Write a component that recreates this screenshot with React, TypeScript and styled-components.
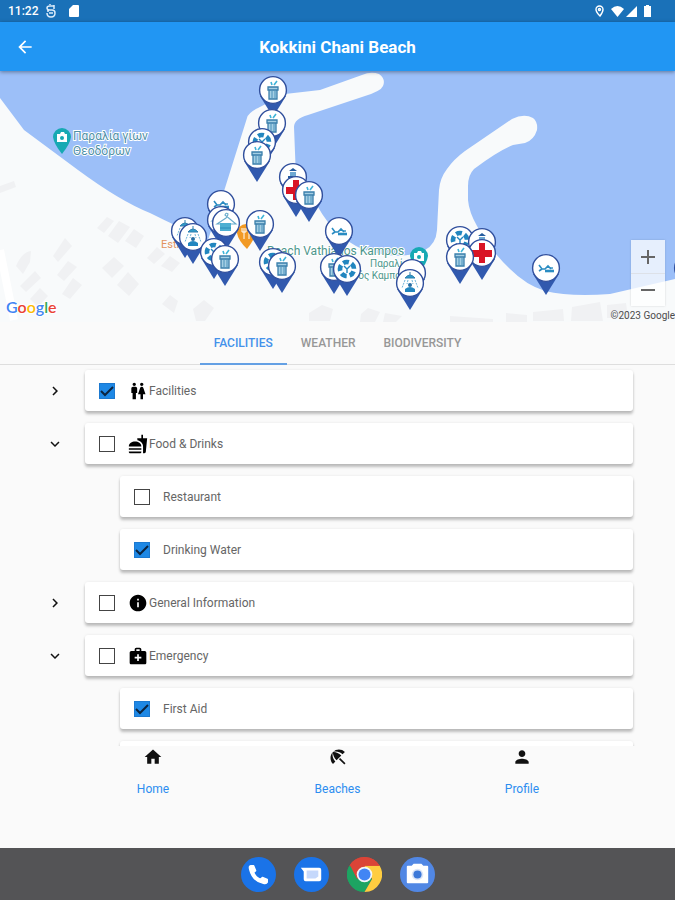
import React, { useState } from "react";
import styled, { createGlobalStyle } from "styled-components";
import {
  MdAdd,
  MdArrowBack,
  MdBeachAccess,
  MdChevronRight,
  MdExpandMore,
  MdFastfood,
  MdHome,
  MdInfo,
  MdMedicalServices,
  MdPerson,
  MdRemove,
  MdWc,
} from "react-icons/md";

const GlobalStyle = createGlobalStyle`
  *, *::before, *::after { box-sizing: border-box; }
  body { margin: 0; background: #fafafa; font-family: Roboto, "Noto Sans", sans-serif; }
  button { font: inherit; border: 0; background: none; padding: 0; cursor: pointer; }
  ul { list-style: none; margin: 0; padding: 0; }
  svg { display: block; }
`;

const Screen = styled.div`
  display: flex;
  flex-direction: column;
  height: 100vh;
  min-height: 640px;
  background: #fafafa;
`;

const StatusBar = styled.div`
  display: flex;
  align-items: center;
  justify-content: space-between;
  flex: none;
  height: 22px;
  padding: 0 22px 0 8px;
  background: #1a71b8;
  color: #fff;
  font-size: 12px;
  font-weight: 500;
`;

const StatusGroup = styled.div<{ $gap: number }>`
  display: flex;
  align-items: center;
  gap: ${(p) => p.$gap}px;
`;

const AppBar = styled.header`
  display: grid;
  grid-template-columns: 50px 1fr 50px;
  align-items: center;
  flex: none;
  height: 49px;
  background: #2196f3;
  color: #fff;
  z-index: 1;
  box-shadow: 0 1px 4px rgba(0, 0, 0, 0.4);
`;

const BackButton = styled.button`
  display: grid;
  place-items: center;
  height: 48px;
  color: #fff;
`;

const Title = styled.h1`
  margin: 0;
  font-size: 17px;
  font-weight: 700;
  line-height: 24px;
  text-align: center;
`;

const MapArea = styled.section`
  position: relative;
  flex: none;
  background: #f8f9fa;
`;

const MapDrawing = styled.svg`
  width: 100%;
  height: auto;
`;

const ZoomControl = styled.div`
  position: absolute;
  right: 10px;
  bottom: 16px;
  display: grid;
  width: 34px;
  background: rgba(255, 255, 255, 0.75);
  box-shadow: 0 0 2px rgba(0, 0, 0, 0.15);
`;

const ZoomButton = styled.button`
  display: grid;
  place-items: center;
  height: 33px;
  color: #666;
  & + & {
    border-top: 1px solid #dde1e8;
  }
`;

const Tabs = styled.div`
  display: flex;
  justify-content: center;
  flex: none;
  height: 43px;
  border-bottom: 1px solid #dedede;
`;

const Tab = styled.button<{ $active: boolean }>`
  height: 43px;
  padding: 0 14px;
  border-bottom: 2px solid ${(p) => (p.$active ? "#64a0e4" : "transparent")};
  color: ${(p) => (p.$active ? "#4391ea" : "#979797")};
  font-size: 12px;
  font-weight: 500;
`;

const List = styled.main`
  flex: 1;
  min-height: 0;
  overflow-y: auto;
  scrollbar-width: none;
  padding: 5px 42px 0 0;
`;

const Tree = styled.ul`
  display: grid;
  gap: 12px;
`;

const Row = styled.li<{ $child?: boolean }>`
  display: flex;
  align-items: center;
  padding-left: ${(p) => (p.$child ? 120 : 45)}px;
`;

const Expander = styled.button`
  flex: none;
  width: 40px;
  height: 40px;
  padding-left: 1px;
  color: #111;
`;

const Card = styled.label`
  display: flex;
  align-items: center;
  flex: 1;
  height: 41px;
  padding-left: 14px;
  border-radius: 3px;
  background: #fff;
  box-shadow: 0 3px 3px rgba(0, 0, 0, 0.24), 0 0 3px rgba(0, 0, 0, 0.08);
  color: #666;
  font-size: 12px;
  cursor: pointer;
`;

const Tick = styled.span`
  display: grid;
  flex: none;
  width: 16px;
  height: 16px;
  & > * {
    grid-area: 1 / 1;
  }
`;

const Box = styled.input`
  appearance: none;
  width: 16px;
  height: 16px;
  margin: 0;
  border: 1px solid #444;
  background: #fff;
  cursor: pointer;
  &:checked {
    border-color: #1c79d0;
    background: #1e88e5;
  }
`;

const TickMark = styled.svg`
  pointer-events: none;
`;

const CardIcon = styled.span`
  display: grid;
  place-items: center;
  width: 20px;
  margin-left: 13px;
  margin-right: 1px;
  color: #000;
`;

const ChildText = styled.span`
  margin-left: 13px;
`;

const BottomNav = styled.nav`
  display: grid;
  grid-template-columns: repeat(3, 1fr);
  align-items: start;
  flex: none;
  height: 102px;
  padding: 0 9%;
`;

const NavLink = styled.a`
  display: grid;
  justify-items: center;
  gap: 14px;
  color: #2c8df0;
  font-size: 12px;
  line-height: 16px;
  text-decoration: none;
  svg {
    color: #111;
  }
`;

const NavIcon = styled.span`
  display: grid;
  place-items: center;
  height: 21px;
`;

const Dock = styled.div`
  display: flex;
  align-items: center;
  justify-content: center;
  gap: 18px;
  flex: none;
  height: 52px;
  background: #545456;
`;

const DockButton = styled.button`
  width: 35px;
  height: 35px;
`;

type Glyph = "bin" | "recycle" | "cross" | "tower" | "lounge" | "hanger" | "shower";

const pins: { x: number; y: number; glyph: Glyph }[] = [
  { x: 273, y: 90, glyph: "bin" },
  { x: 272, y: 123, glyph: "bin" },
  { x: 262, y: 142, glyph: "recycle" },
  { x: 257, y: 155, glyph: "bin" },
  { x: 293, y: 177, glyph: "tower" },
  { x: 296, y: 190, glyph: "cross" },
  { x: 309, y: 195, glyph: "bin" },
  { x: 221, y: 204, glyph: "lounge" },
  { x: 221, y: 220, glyph: "hanger" },
  { x: 226, y: 223, glyph: "hanger" },
  { x: 260, y: 224, glyph: "bin" },
  { x: 185, y: 231, glyph: "shower" },
  { x: 193, y: 237, glyph: "shower" },
  { x: 214, y: 252, glyph: "recycle" },
  { x: 225, y: 259, glyph: "bin" },
  { x: 339, y: 231, glyph: "lounge" },
  { x: 273, y: 262, glyph: "recycle" },
  { x: 282, y: 266, glyph: "bin" },
  { x: 334, y: 267, glyph: "bin" },
  { x: 347, y: 269, glyph: "recycle" },
  { x: 412, y: 273, glyph: "lounge" },
  { x: 410, y: 283, glyph: "shower" },
  { x: 460, y: 240, glyph: "recycle" },
  { x: 482, y: 242, glyph: "tower" },
  { x: 482, y: 253, glyph: "cross" },
  { x: 460, y: 257, glyph: "bin" },
  { x: 546, y: 268, glyph: "lounge" },
  { x: 688, y: 268, glyph: "bin" },
];

function PinGlyph({ glyph }: { glyph: Glyph }) {
  switch (glyph) {
    case "bin":
      return (
        <g>
          <path d="M-5 -3H5V0H4L4 9H-4L-4 0H-5Z" fill="#a5cfe4" />
          <path d="M-5 -3H5V0H-5ZM-4 0V9H4V0" fill="none" stroke="#3a7fab" strokeWidth="1.3" />
          <path d="M-1 1V8M2 1V8" stroke="#4a92bb" strokeWidth="1" />
          <path d="M-1 -5L-2 -8M1 -5L4 -9" stroke="#3fb4d8" strokeWidth="1.6" />
        </g>
      );
    case "recycle":
      return (
        <g>
          <circle
            r="7"
            fill="none"
            stroke="#2286bf"
            strokeWidth="4.6"
            strokeDasharray="5.8 3"
            transform="rotate(20)"
          />
          <path d="M-3 -3L0 0L3 -3M0 0V4" fill="none" stroke="#2286bf" strokeWidth="1.4" />
        </g>
      );
    case "cross":
      return <path d="M-3 -10H3V-3H10V4H3V10H-3V4H-10V-3H-3Z" fill="#d91425" />;
    case "tower":
      return (
        <g fill="#245b9e">
          <path d="M-4 -6L0 -9L4 -6Z" />
          <path d="M-3 -5H3V-1H-3Z" fill="#6fa9d2" />
          <path d="M-5 -1H5V1H-5ZM-4 1H-2L-4 10H-6ZM2 1H4L6 10H4Z" />
        </g>
      );
    case "lounge":
      return (
        <g fill="none" stroke="#2a8cc2" strokeWidth="1.6">
          <path d="M-7 -3L-4 1L-7 3M-4 1H-1L2 -2L5 1" />
          <path d="M-1 3H8" strokeWidth="2.6" />
          <path d="M4 0H7" strokeWidth="1.4" />
        </g>
      );
    case "hanger":
      return (
        <g>
          <path d="M-1 -8Q0 -11 2 -9Q2 -7 0 -5L-9 1H10Z" fill="none" stroke="#68abcb" strokeWidth="1.1" />
          <path d="M-6 0H5V8H-6Z" fill="#4dafd2" />
          <path d="M-6 5H5" stroke="#2a8cb8" strokeWidth="1" />
        </g>
      );
    case "shower":
      return (
        <g>
          <path d="M0 -11V-8M-5 -5Q0 -11 5 -5Z" stroke="#2f7faf" fill="#2f9bc9" />
          <path d="M-5 -3L-8 5M5 -3L8 5M-2 -3L-3 1M2 -3L3 1" stroke="#6db4d8" strokeWidth="1" strokeDasharray="2 1" />
          <circle cy="2" r="2" fill="#286fa5" />
          <path d="M-5 9V6Q0 2 5 6V9Z" fill="#2286bf" />
        </g>
      );
  }
}

function Pin({ x, y, glyph }: { x: number; y: number; glyph: Glyph }) {
  return (
    <g transform={`translate(${x} ${y})`}>
      <path d="M-13 6L0 27L13 6Z" fill="#3159ae" />
      <circle r="13.4" fill="#fff" stroke="#304f9d" strokeWidth="1.4" />
      <PinGlyph glyph={glyph} />
    </g>
  );
}

function PhotoPin({ x, y }: { x: number; y: number }) {
  return (
    <g transform={`translate(${x} ${y})`}>
      <path d="M-9 -2A9 9 0 1 1 9 -2Q8 5 0 15Q-8 5 -9 -2Z" fill="#17a9b3" />
      <path d="M-5 -5H-2L-1 -7H2L3 -5H5V3H-5Z" fill="#fff" />
      <circle cy="-1" r="2" fill="#17a9b3" />
    </g>
  );
}

const halo = { stroke: "#ffffff", strokeWidth: 2, paintOrder: "stroke" } as const;

function BeachMap() {
  return (
    <MapDrawing viewBox="0 71 675 251" role="img" aria-label="Map of Kokkini Chani Beach">
      <rect y="71" width="675" height="251" fill="#9cbff8" />
      <path
        d="M0 98L24 130L78 170Q120 201 150 213Q180 228 208 240L225 188L247 118Q248 113 258 108L285 94L320 90L362 75Q371 71 379 74Q386 79 383 86Q381 91 365 96L308 115Q294 119 294 127L296 178L318 207Q334 236 362 249Q400 262 425 250Q436 244 437 230L439 190Q440 178 447 169Q454 159 465 151L512 119Q524 113 533 118Q538 122 537 130Q534 140 525 143L513 145Q498 151 474 169Q468 175 468 186V200Q469 212 477 226Q490 250 510 269Q526 285 545 291Q570 297 610 294L675 279V322H0Z"
        fill="#f8fafb"
      />
      <path d="M0 250L14 320" stroke="#fff" strokeWidth="8" />
      <g fill="#f0f1f3">
        <path d="M0 186L14 181L16 187L0 193Z" />
        <path d="M97 228L107 217L114 221L104 233Z" />
        <path d="M108 236L119 221L130 227L118 243Z" />
        <path d="M125 241L134 229L144 236L136 248Z" />
        <path d="M53 256L65 238L72 246L58 262Z" />
        <path d="M57 275L68 261L77 267L64 281Z" />
        <path d="M62 294L73 278L82 285L70 299Z" />
        <path d="M102 268L114 257L124 266L112 278Z" />
        <path d="M117 285L128 272L139 284L129 296Z" />
        <path d="M16 266Q22 252 31 251L30 262L23 274Z" />
        <path d="M20 286L35 271L41 278L26 292Z" />
        <path d="M30 299L40 288L48 296L38 307Z" />
        <path d="M147 258L157 247L165 254L154 264Z" />
        <path d="M161 266L170 256L180 263L172 272Z" />
        <path d="M162 304L170 295L178 301L174 313Z" />
        <path d="M193 309L204 300L214 308L205 321H196Z" />
        <path d="M309 313L322 305L333 309L330 321H309Z" />
        <path d="M361 314L368 308L380 312L375 322H360Z" />
        <path d="M385 313L402 316L396 322H383Z" />
        <path d="M450 316L493 319V322H450Z" />
        <path d="M506 313L527 315V322H506Z" />
        <path d="M533 312L563 309L564 321H533Z" />
        <path d="M572 307L600 302L603 321H571Z" />
        <path d="M607 305L626 303L628 318H607Z" />
      </g>
      <g fontFamily="Roboto, 'Noto Sans', sans-serif" fontSize="12">
        <g fill="#4f90a6" {...halo}>
          <text x="73" y="140">Παραλία γίων</text>
          <text x="73" y="155">Θεοδόρων</text>
        </g>
        <g fill="#4d978c" {...halo}>
          <text x="267" y="255">Beach Vathianos Kampos</text>
          <text x="370" y="267" fontSize="10">Παραλία</text>
          <text x="327" y="279" fontSize="10">Βαθιανός Καμπος</text>
        </g>
        <text x="161" y="248" fontSize="11" fill="#e2935e">Estiatorio</text>
      </g>
      <PhotoPin x={62} y={139} />
      <PhotoPin x={419} y={258} />
      <path d="M237 233A9 9 0 0 1 255 233Q255 239 247 249Q238 240 237 233Z" fill="#f29a24" />
      <path d="M244 228V239M249 228V239M242 228V232H246V228" fill="none" stroke="#fff" strokeWidth="1" />
      {pins.map((pin) => (
        <Pin key={`${pin.x}-${pin.y}`} {...pin} />
      ))}
      <text x="6" y="313" fontFamily="Lato, sans-serif" fontSize="16" fontWeight="600" {...halo}>
        <tspan fill="#4285f4">G</tspan>
        <tspan fill="#ea4335">o</tspan>
        <tspan fill="#fbbc05">o</tspan>
        <tspan fill="#4285f4">g</tspan>
        <tspan fill="#34a853">l</tspan>
        <tspan fill="#ea4335">e</tspan>
      </text>
      <text x="675" y="319" textAnchor="end" fontFamily="Roboto, sans-serif" fontSize="10" fill="#4c4c4c">
        ©2023 Google
      </text>
    </MapDrawing>
  );
}

function PhoneIcon() {
  return (
    <svg viewBox="0 0 36 36" aria-hidden="true">
      <circle cx="18" cy="18" r="18" fill="#1a73e8" />
      <path
        d="M10 9H13L15 14L13 16Q15 21 20 23L22 21L27 23V26Q26 28 23 27Q12 25 9 13Q8 9 10 9Z"
        fill="#fff"
        stroke="#fff"
        strokeWidth="1.5"
        strokeLinejoin="round"
      />
    </svg>
  );
}

function MessagesIcon() {
  return (
    <svg viewBox="0 0 36 36" aria-hidden="true">
      <circle cx="18" cy="18" r="18" fill="#1a73e8" />
      <path d="M7 11H26Q28 11 28 13V23Q28 25 26 25H12Q10 25 10 23V15Z" fill="#fff" />
      <path d="M13 14H25V20L22 22H13Z" fill="#c5d8fb" />
    </svg>
  );
}

function ChromeIcon() {
  return (
    <svg viewBox="0 0 36 36" aria-hidden="true">
      <path d="M18 18L2.4 9A18 18 0 0 1 33.6 9Z" fill="#db4437" />
      <path d="M18 18L2.4 9A18 18 0 0 0 18 36L25.8 22.5Z" fill="#1da462" />
      <path d="M18 9H33.6A18 18 0 0 1 18 36L25.8 22.5Z" fill="#ffcd40" />
      <path d="M3 8.2L10.2 22.5L18 18V9H33.6A18 18 0 0 0 3 8.2Z" fill="#db4437" />
      <path d="M2.4 9L10.2 22.5L18 26L14 35.500A18 18 0 0 1 2.4 9Z" fill="#1da462" />
      <circle cx="18" cy="18" r="8" fill="#f4f6fa" />
      <circle cx="18" cy="18" r="6.2" fill="#4285f4" />
    </svg>
  );
}

function CameraIcon() {
  return (
    <svg viewBox="0 0 36 36" aria-hidden="true">
      <circle cx="18" cy="18" r="18" fill="#5187e4" />
      <path d="M7 10Q7 9 8 9H12L14 7H22L24 9H28Q29 9 29 10V26Q29 27 28 27H8Q7 27 7 26Z" fill="#fff" />
      <circle cx="18" cy="18" r="6" fill="#dbe5f8" />
      <circle cx="18" cy="18" r="4.2" fill="#3c78d8" />
    </svg>
  );
}

const groups = [
  { name: "Facilities", icon: <MdWc size={20} />, open: false, children: [] },
  { name: "Food & Drinks", icon: <MdFastfood size={20} />, open: true, children: ["Restaurant", "Drinking Water"] },
  { name: "General Information", icon: <MdInfo size={20} />, open: false, children: [] },
  { name: "Emergency", icon: <MdMedicalServices size={20} />, open: true, children: ["First Aid", ""] },
];

const tabs = ["FACILITIES", "WEATHER", "BIODIVERSITY"];

function TickBox({ checked, onChange }: { checked: boolean; onChange: () => void }) {
  return (
    <Tick>
      <Box type="checkbox" checked={checked} onChange={onChange} />
      {checked && (
        <TickMark width="16" height="16" viewBox="0 0 16 16" aria-hidden="true">
          <path d="M2 8L6 12L14 4" fill="none" stroke="#0b2440" strokeWidth="2" />
        </TickMark>
      )}
    </Tick>
  );
}

export default function App() {
  const [tab, setTab] = useState("FACILITIES");
  const [open, setOpen] = useState(groups.filter((g) => g.open).map((g) => g.name));
  const [checked, setChecked] = useState(["Facilities", "Drinking Water", "First Aid"]);
  const flip = (list: string[], name: string) =>
    list.includes(name) ? list.filter((n) => n !== name) : [...list, name];

  return (
    <>
      <GlobalStyle />
      <Screen>
        <StatusBar>
          <StatusGroup $gap={8}>
            <span>11:22</span>
            <svg width="10" height="14" viewBox="0 0 10 14" fill="none" stroke="#dcecfa" strokeWidth="1.5">
              <path d="M8 2H4Q1 2 1 4Q1 6 4 6H6Q9 6 9 9Q9 13 5 13Q1 13 1 9M4 1V0M8 1V5M3 9H7M1 7H3" />
            </svg>
            <svg width="20" height="14" viewBox="0 0 20 14" fill="#fff">
              <path d="M9 1H14Q15 1 15 2V12Q15 13 14 13H6Q5 13 5 12V5Z" />
            </svg>
          </StatusGroup>
          <StatusGroup $gap={2}>
            <svg width="14" height="12" viewBox="0 0 14 12" fill="none" stroke="#fff" strokeWidth="1.4">
              <path d="M5 11Q1 7 1 4.500A3.500 3.500 0 0 1 8 4.500Q8 7 5 11Z" />
              <circle cx="4.500" cy="4.500" r="1" />
            </svg>
            <svg width="13" height="11" viewBox="0 0 13 11" fill="#fff">
              <path d="M0 3Q6.500 -3 13 3L6.500 11Z" />
            </svg>
            <svg width="11" height="11" viewBox="0 0 11 11" fill="#fff">
              <path d="M11 0V11H0Z" />
            </svg>
            <svg width="14" height="12" viewBox="0 0 14 12" fill="#fff">
              <path d="M7 0H10V1H12V12H5V1H7Z" />
            </svg>
          </StatusGroup>
        </StatusBar>
        <AppBar>
          <BackButton aria-label="Back">
            <MdArrowBack size={20} />
          </BackButton>
          <Title>Kokkini Chani Beach</Title>
        </AppBar>
        <MapArea>
          <BeachMap />
          <ZoomControl>
            <ZoomButton aria-label="Zoom in">
              <MdAdd size={24} />
            </ZoomButton>
            <ZoomButton aria-label="Zoom out">
              <MdRemove size={24} />
            </ZoomButton>
          </ZoomControl>
        </MapArea>
        <Tabs role="tablist">
          {tabs.map((name) => (
            <Tab key={name} role="tab" aria-selected={tab === name} $active={tab === name} onClick={() => setTab(name)}>
              {name}
            </Tab>
          ))}
        </Tabs>
        <List>
          <Tree>
            {groups.map((group) => (
              <React.Fragment key={group.name}>
                <Row>
                  <Expander aria-label={`Toggle ${group.name}`} onClick={() => setOpen(flip(open, group.name))}>
                    {open.includes(group.name) ? <MdExpandMore size={18} /> : <MdChevronRight size={18} />}
                  </Expander>
                  <Card>
                    <TickBox
                      checked={checked.includes(group.name)}
                      onChange={() => setChecked(flip(checked, group.name))}
                    />
                    <CardIcon>{group.icon}</CardIcon>
                    {group.name}
                  </Card>
                </Row>
                {open.includes(group.name) &&
                  group.children.map((child) => (
                    <Row key={child} $child>
                      <Card>
                        <TickBox checked={checked.includes(child)} onChange={() => setChecked(flip(checked, child))} />
                        <ChildText>{child}</ChildText>
                      </Card>
                    </Row>
                  ))}
              </React.Fragment>
            ))}
          </Tree>
        </List>
        <BottomNav>
          <NavLink href="#home">
            <NavIcon>
              <MdHome size={20} />
            </NavIcon>
            Home
          </NavLink>
          <NavLink href="#beaches">
            <NavIcon>
              <MdBeachAccess size={20} />
            </NavIcon>
            Beaches
          </NavLink>
          <NavLink href="#profile">
            <NavIcon>
              <MdPerson size={20} />
            </NavIcon>
            Profile
          </NavLink>
        </BottomNav>
        <Dock>
          <DockButton aria-label="Phone">
            <PhoneIcon />
          </DockButton>
          <DockButton aria-label="Messages">
            <MessagesIcon />
          </DockButton>
          <DockButton aria-label="Chrome">
            <ChromeIcon />
          </DockButton>
          <DockButton aria-label="Camera">
            <CameraIcon />
          </DockButton>
        </Dock>
      </Screen>
    </>
  );
}
